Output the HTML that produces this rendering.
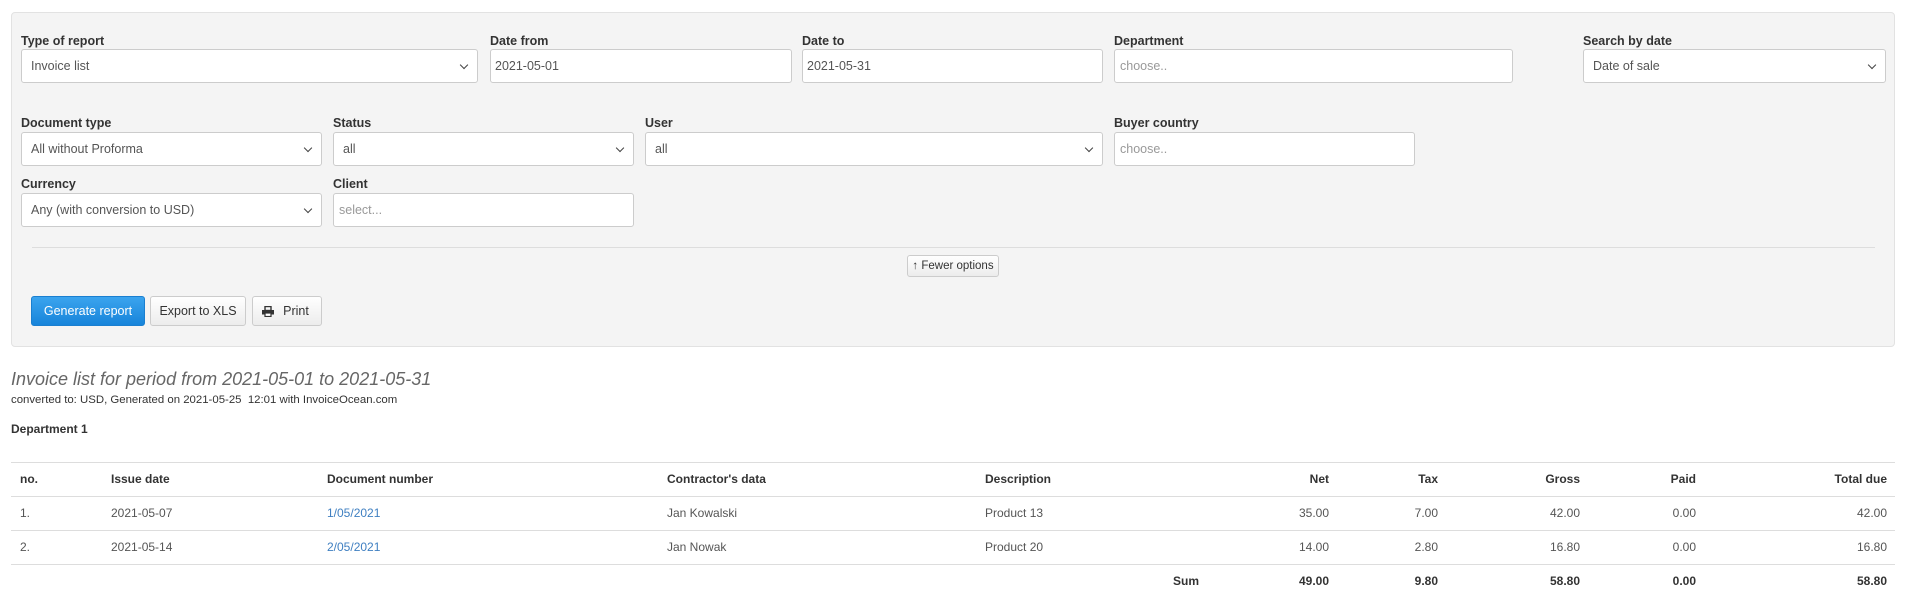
<!DOCTYPE html>
<html><head><meta charset="utf-8"><style>
*{box-sizing:border-box;margin:0;padding:0}
body{width:1913px;height:612px;background:#fff;font-family:"Liberation Sans",Arial,sans-serif;color:#555;font-size:12px;position:relative;overflow:hidden}
.a{position:absolute}
.panel{left:11px;top:12px;width:1884px;height:335px;background:#f4f4f4;border:1px solid #e2e2e2;border-radius:4px}
.lbl{font-weight:bold;color:#333;font-size:12.5px;line-height:14px}
.in{background:#fff;border:1px solid #ccc;border-radius:3px;height:34px;line-height:32px;padding-left:9px;color:#555;font-size:12.5px}
.in.ph{color:#999;padding-left:5px}
.sel::after{content:"";position:absolute;right:10px;top:12px;width:5px;height:5px;border-right:1.6px solid #444;border-bottom:1.6px solid #444;transform:rotate(45deg)}
.btn{border:1px solid #ccc;border-radius:3px;background:linear-gradient(#fff,#ececec);color:#333;font-size:12.5px;text-align:center}
.t{color:#555;font-size:12px;line-height:14px}
.h{color:#333;font-weight:bold;font-size:12px;line-height:14px}
.line{position:absolute;left:11px;width:1884px;height:1px;background:#ddd}
.r{text-align:right}
a{color:#3f7fc1;text-decoration:none}
</style></head><body>
<div class="a panel"></div>

<div class="a lbl" style="left:21px;top:34px">Type of report</div>
<div class="a in sel" style="left:21px;top:49px;width:457px">Invoice list</div>
<div class="a lbl" style="left:490px;top:34px">Date from</div>
<div class="a in" style="left:490px;top:49px;width:302px;padding-left:4px">2021-05-01</div>
<div class="a lbl" style="left:802px;top:34px">Date to</div>
<div class="a in" style="left:802px;top:49px;width:301px;padding-left:4px">2021-05-31</div>
<div class="a lbl" style="left:1114px;top:34px">Department</div>
<div class="a in ph" style="left:1114px;top:49px;width:399px">choose..</div>
<div class="a lbl" style="left:1583px;top:34px">Search by date</div>
<div class="a in sel" style="left:1583px;top:49px;width:303px">Date of sale</div>

<div class="a lbl" style="left:21px;top:116px">Document type</div>
<div class="a in sel" style="left:21px;top:132px;width:301px">All without Proforma</div>
<div class="a lbl" style="left:333px;top:116px">Status</div>
<div class="a in sel" style="left:333px;top:132px;width:301px">all</div>
<div class="a lbl" style="left:645px;top:116px">User</div>
<div class="a in sel" style="left:645px;top:132px;width:458px">all</div>
<div class="a lbl" style="left:1114px;top:116px">Buyer country</div>
<div class="a in ph" style="left:1114px;top:132px;width:301px">choose..</div>

<div class="a lbl" style="left:21px;top:177px">Currency</div>
<div class="a in sel" style="left:21px;top:193px;width:301px">Any (with conversion to USD)</div>
<div class="a lbl" style="left:333px;top:177px">Client</div>
<div class="a in ph" style="left:333px;top:193px;width:301px">select...</div>

<div class="a" style="left:32px;top:247px;width:1843px;height:1px;background:#ddd"></div>
<div class="a btn" style="left:907px;top:255px;width:92px;height:22px;line-height:20px;font-size:11.5px">↑ Fewer options</div>

<div class="a" style="left:31px;top:296px;width:114px;height:30px;line-height:28px;border:1px solid #1a7fd0;border-radius:3px;background:linear-gradient(#3ba4ee,#1784da);color:#fff;text-align:center;font-size:12.5px">Generate report</div>
<div class="a btn" style="left:150px;top:296px;width:96px;height:30px;line-height:28px">Export to XLS</div>
<div class="a btn" style="left:252px;top:296px;width:70px;height:30px;line-height:28px;padding-left:18px">Print
<svg class="a" style="left:9px;top:9px" width="12" height="11" viewBox="0 0 12 11"><rect x="3" y="0.5" width="6" height="4" fill="none" stroke="#333" stroke-width="1.4"/><rect x="0" y="4" width="12" height="4.5" fill="#333"/><rect x="3" y="7" width="6" height="3.5" fill="#fff" stroke="#333" stroke-width="1.2"/></svg></div>

<div class="a" style="left:11px;top:369px;font-size:18px;font-style:italic;color:#666">Invoice list for period from 2021-05-01 to 2021-05-31</div>
<div class="a" style="left:11px;top:394px;font-size:11.4px;color:#333">converted to: USD, Generated on 2021-05-25&nbsp; 12:01 with InvoiceOcean.com</div>
<div class="a" style="left:11px;top:422px;font-size:12px;font-weight:bold;color:#333">Department 1</div>

<div class="line" style="top:462px"></div>
<div class="line" style="top:496px"></div>
<div class="line" style="top:530px"></div>
<div class="line" style="top:564px"></div>

<div class="a h" style="left:20px;top:472px">no.</div>
<div class="a h" style="left:111px;top:472px">Issue date</div>
<div class="a h" style="left:327px;top:472px">Document number</div>
<div class="a h" style="left:667px;top:472px">Contractor's data</div>
<div class="a h" style="left:985px;top:472px">Description</div>
<div class="a h r" style="left:1229px;width:100px;top:472px">Net</div>
<div class="a h r" style="left:1338px;width:100px;top:472px">Tax</div>
<div class="a h r" style="left:1480px;width:100px;top:472px">Gross</div>
<div class="a h r" style="left:1596px;width:100px;top:472px">Paid</div>
<div class="a h r" style="left:1787px;width:100px;top:472px">Total due</div>

<div class="a t" style="left:20px;top:506px">1.</div>
<div class="a t" style="left:111px;top:506px">2021-05-07</div>
<div class="a t" style="left:327px;top:506px"><a>1/05/2021</a></div>
<div class="a t" style="left:667px;top:506px">Jan Kowalski</div>
<div class="a t" style="left:985px;top:506px">Product 13</div>
<div class="a t r" style="left:1229px;width:100px;top:506px">35.00</div>
<div class="a t r" style="left:1338px;width:100px;top:506px">7.00</div>
<div class="a t r" style="left:1480px;width:100px;top:506px">42.00</div>
<div class="a t r" style="left:1596px;width:100px;top:506px">0.00</div>
<div class="a t r" style="left:1787px;width:100px;top:506px">42.00</div>

<div class="a t" style="left:20px;top:540px">2.</div>
<div class="a t" style="left:111px;top:540px">2021-05-14</div>
<div class="a t" style="left:327px;top:540px"><a>2/05/2021</a></div>
<div class="a t" style="left:667px;top:540px">Jan Nowak</div>
<div class="a t" style="left:985px;top:540px">Product 20</div>
<div class="a t r" style="left:1229px;width:100px;top:540px">14.00</div>
<div class="a t r" style="left:1338px;width:100px;top:540px">2.80</div>
<div class="a t r" style="left:1480px;width:100px;top:540px">16.80</div>
<div class="a t r" style="left:1596px;width:100px;top:540px">0.00</div>
<div class="a t r" style="left:1787px;width:100px;top:540px">16.80</div>

<div class="a h" style="left:1173px;top:574px">Sum</div>
<div class="a h r" style="left:1229px;width:100px;top:574px">49.00</div>
<div class="a h r" style="left:1338px;width:100px;top:574px">9.80</div>
<div class="a h r" style="left:1480px;width:100px;top:574px">58.80</div>
<div class="a h r" style="left:1596px;width:100px;top:574px">0.00</div>
<div class="a h r" style="left:1787px;width:100px;top:574px">58.80</div>
</body></html>
